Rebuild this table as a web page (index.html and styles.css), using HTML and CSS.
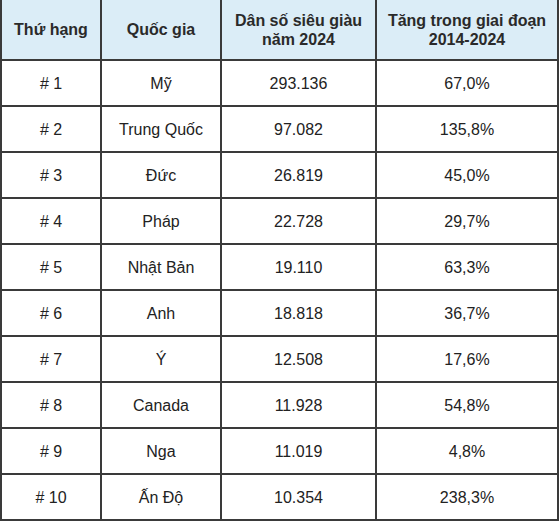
FILE: index.html
```html
<!DOCTYPE html>
<html lang="vi">
<head>
<meta charset="utf-8">
<link rel="stylesheet" href="styles.css">
</head>
<body>
<div class="table">
  <div class="cell head">Thứ hạng</div>
  <div class="cell head">Quốc gia</div>
  <div class="cell head">Dân số siêu giàu<br>năm 2024</div>
  <div class="cell head">Tăng trong giai đoạn<br>2014-2024</div>

  <div class="cell"># 1</div><div class="cell">Mỹ</div><div class="cell">293.136</div><div class="cell">67,0%</div>
  <div class="cell"># 2</div><div class="cell">Trung Quốc</div><div class="cell">97.082</div><div class="cell">135,8%</div>
  <div class="cell"># 3</div><div class="cell">Đức</div><div class="cell">26.819</div><div class="cell">45,0%</div>
  <div class="cell"># 4</div><div class="cell">Pháp</div><div class="cell">22.728</div><div class="cell">29,7%</div>
  <div class="cell"># 5</div><div class="cell">Nhật Bản</div><div class="cell">19.110</div><div class="cell">63,3%</div>
  <div class="cell"># 6</div><div class="cell">Anh</div><div class="cell">18.818</div><div class="cell">36,7%</div>
  <div class="cell"># 7</div><div class="cell">Ý</div><div class="cell">12.508</div><div class="cell">17,6%</div>
  <div class="cell"># 8</div><div class="cell">Canada</div><div class="cell">11.928</div><div class="cell">54,8%</div>
  <div class="cell"># 9</div><div class="cell">Nga</div><div class="cell">11.019</div><div class="cell">4,8%</div>
  <div class="cell"># 10</div><div class="cell">Ấn Độ</div><div class="cell">10.354</div><div class="cell">238,3%</div>
</div>
</body>
</html>
```

FILE: styles.css
```css
html, body {
  margin: 0;
  padding: 0;
  background: #ffffff;
}

body {
  font-family: "Liberation Sans", Arial, sans-serif;
  width: 560px;
  height: 522px;
  overflow: hidden;
}

.table {
  display: grid;
  grid-template-columns: 98px 118px 153px 180px;
  grid-template-rows: 59px repeat(10, 44px);
  gap: 2px;
  padding: 0 2px 2px 2px;
  width: max-content;
  background: #3a3a3a;
}

.cell {
  background: #ffffff;
  color: #222222;
  font-size: 16px;
  line-height: 19px;
  display: flex;
  align-items: center;
  justify-content: center;
  text-align: center;
}

.head {
  background: #dbedf7;
  color: #2a2a2a;
  font-weight: bold;
}
```
